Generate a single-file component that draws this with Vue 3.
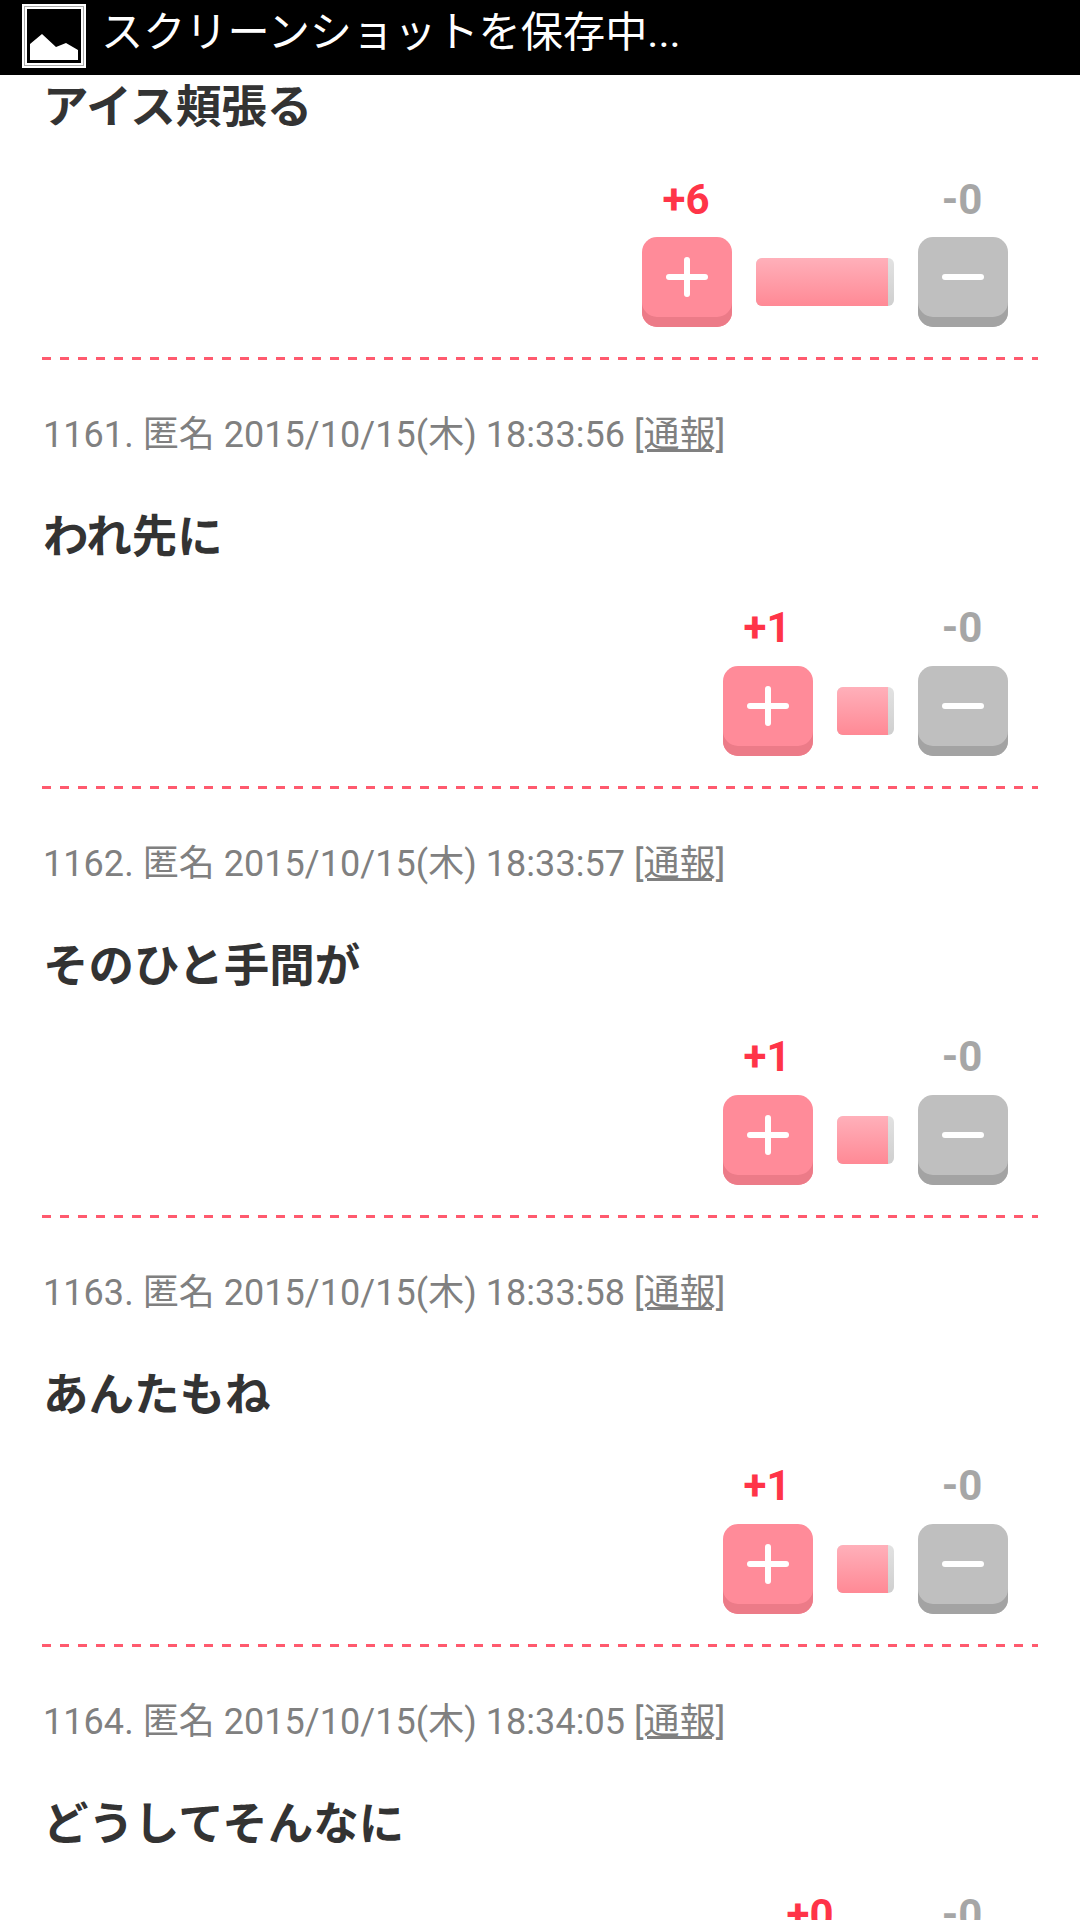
<script setup>
const comments = [
  { id: 0, title: 'アイス頬張る', plus: 6, minus: 0, gauge: 138 },
  { id: 1161, date: '2015/10/15(木) 18:33:56', title: 'われ先に', plus: 1, minus: 0, gauge: 57 },
  { id: 1162, date: '2015/10/15(木) 18:33:57', title: 'そのひと手間が', plus: 1, minus: 0, gauge: 57 },
  { id: 1163, date: '2015/10/15(木) 18:33:58', title: 'あんたもね', plus: 1, minus: 0, gauge: 57 },
  { id: 1164, date: '2015/10/15(木) 18:34:05', title: 'どうしてそんなに', plus: 0, minus: 0, gauge: 14 }
]
</script>

<template>
  <div class="page">
    <div class="status-bar">
      <svg class="status-icon" width="64" height="64" viewBox="0 0 64 64">
        <rect x="2.5" y="2.5" width="59" height="59" fill="none" stroke="#fff" stroke-width="5" />
        <rect x="2.5" y="2.5" width="59" height="59" fill="none" stroke="#aaa" stroke-width="1" />
        <path d="M8 56V40L20 30L34 43L44 39L56 46V56Z" fill="#fff" />
      </svg>
      <span class="status-text">スクリーンショットを保存中...</span>
    </div>

    <div v-for="item in comments" :key="item.id" class="comment" :class="{ 'comment-first': !item.date }">
      <div v-if="item.date" class="meta">
        {{ item.id }}. 匿名 {{ item.date }} <span class="report">[通報]</span>
      </div>
      <div class="title">{{ item.title }}</div>
      <div class="votes">
        <div class="vote">
          <div class="count count-plus">+{{ item.plus }}</div>
          <div class="btn btn-plus">
            <span class="bar-h"></span>
            <span class="bar-v"></span>
          </div>
        </div>
        <div class="gauge" :style="{ width: item.gauge + 'px' }"><div class="gauge-fill"></div></div>
        <div class="vote">
          <div class="count count-minus">-{{ item.minus }}</div>
          <div class="btn btn-minus">
            <span class="bar-h"></span>
          </div>
        </div>
      </div>
      <div class="divider"></div>
    </div>
  </div>
</template>

<style>
html,
body {
  margin: 0;
  background: #fff;
}
</style>

<style scoped>
.page {
  width: 1080px;
  height: 1920px;
  overflow: hidden;
  background: #fff;
  font-family: Roboto, "Noto Sans CJK JP", sans-serif;
}
.status-bar {
  display: flex;
  align-items: flex-start;
  box-sizing: border-box;
  height: 75px;
  padding: 4px 0 0 22px;
  background: #000;
  color: #fff;
}
.status-icon {
  flex: none;
}
.status-text {
  margin-left: 15px;
  font-size: 42.2px;
  line-height: 58px;
  white-space: nowrap;
}
.comment {
  margin: 0 42px;
  padding-top: 48px;
}
.comment-first {
  padding-top: 6px;
}
.meta {
  height: 54px;
  margin-bottom: 49px;
  padding-left: 1px;
  color: #808080;
  font-size: 36px;
  letter-spacing: 0.05px;
  line-height: 54px;
  white-space: nowrap;
}
.report {
  text-decoration: underline;
}
.title {
  height: 54px;
  padding-left: 1px;
  color: #333;
  font-size: 45.5px;
  font-weight: 700;
  line-height: 54px;
  white-space: nowrap;
}
.votes {
  display: flex;
  justify-content: flex-end;
  align-items: flex-end;
  gap: 24px;
  margin-top: 39px;
  padding-right: 30px;
}
.vote {
  width: 90px;
}
.count {
  height: 48px;
  margin-bottom: 14px;
  padding-right: 2px;
  font-size: 42px;
  font-weight: 700;
  line-height: 48px;
  text-align: center;
}
.comment-first .count {
  margin-top: 2px;
  margin-bottom: 13px;
}
.count-plus {
  color: #ff3448;
}
.count-minus {
  color: #a6a6a6;
}
.btn {
  position: relative;
  box-sizing: border-box;
  width: 90px;
  height: 90px;
  border-radius: 15px;
}
.btn-plus {
  background: #ff8b99;
  box-shadow: inset 0 -10px 0 #ec7b88;
}
.btn-minus {
  background: #bfbfbf;
  box-shadow: inset 0 -10px 0 #a3a3a3;
}
.bar-h,
.bar-v {
  position: absolute;
  background: #fff;
  border-radius: 3px;
}
.bar-h {
  left: 24px;
  top: 37px;
  width: 42px;
  height: 6px;
}
.bar-v {
  left: 42px;
  top: 20px;
  width: 6px;
  height: 40px;
}
.gauge {
  box-sizing: border-box;
  height: 48px;
  margin-bottom: 21px;
  padding-right: 6px;
  overflow: hidden;
  border-radius: 6px;
  background: linear-gradient(#e2e2e2, #cfcfcf);
}
.gauge-fill {
  height: 100%;
  background: linear-gradient(#ffb0ba, #ff8995);
}
.divider {
  height: 3px;
  margin-top: 30px;
  background: repeating-linear-gradient(90deg, #ff5a6e 0 9px, transparent 9px 18px);
}
</style>
